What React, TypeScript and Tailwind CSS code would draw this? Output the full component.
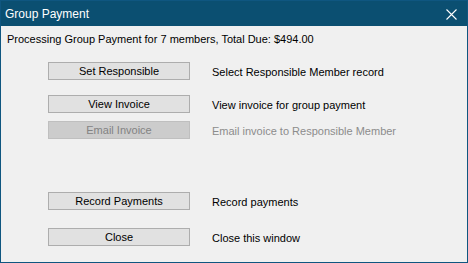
import React from 'react';

type Row = { label: string; desc: string; disabled?: boolean; mt: string };

const rows: Row[] = [
  { label: 'Set Responsible', desc: 'Select Responsible Member record', mt: 'mt-[16px]' },
  { label: 'View Invoice', desc: 'View invoice for group payment', mt: 'mt-[15px]' },
  { label: 'Email Invoice', desc: 'Email invoice to Responsible Member', disabled: true, mt: 'mt-[8px]' },
  { label: 'Record Payments', desc: 'Record payments', mt: 'mt-[53px]' },
  { label: 'Close', desc: 'Close this window', mt: 'mt-[18px]' },
];

const App: React.FC = () => {
  return (
    <div className="w-[468px] h-[263px] bg-[#f0f0f0] border border-[#0f5680] flex flex-col font-['Segoe_UI','Liberation_Sans',sans-serif] text-[11px] text-black overflow-hidden">
      {/* Title bar */}
      <div className="h-[25px] bg-[#0b4f71] flex items-center justify-between pl-[4px] pr-[10px] text-white">
        <span className="text-[12px] leading-[14px] mt-[1px]">Group Payment</span>
        <svg width="11" height="11" viewBox="0 0 11 11" className="mt-[1px]">
          <path d="M0.5 0.5 L10.5 10.5 M10.5 0.5 L0.5 10.5" stroke="white" strokeWidth="1.1" />
        </svg>
      </div>

      {/* Body */}
      <div className="flex flex-col pt-[6px]">
        <p className="leading-[14px] pl-[6px]">Processing Group Payment for 7 members, Total Due: $494.00</p>

        {rows.map((r) => (
          <div key={r.label} className={`flex items-center ${r.mt} pl-[47px]`}>
            <button
              disabled={r.disabled}
              className={
                r.disabled
                  ? 'w-[142px] h-[18px] bg-[#cccccc] border border-[#bfbfbf] text-[#838383] leading-[16px]'
                  : 'w-[142px] h-[18px] bg-[#e1e1e1] border border-[#adadad] text-black leading-[16px]'
              }
            >
              {r.label}
            </button>
            <span className={`ml-[22px] leading-[14px] mt-[1px] ${r.disabled ? 'text-[#8c8c8c]' : 'text-black'}`}>
              {r.desc}
            </span>
          </div>
        ))}
      </div>
    </div>
  );
};

export default App;
